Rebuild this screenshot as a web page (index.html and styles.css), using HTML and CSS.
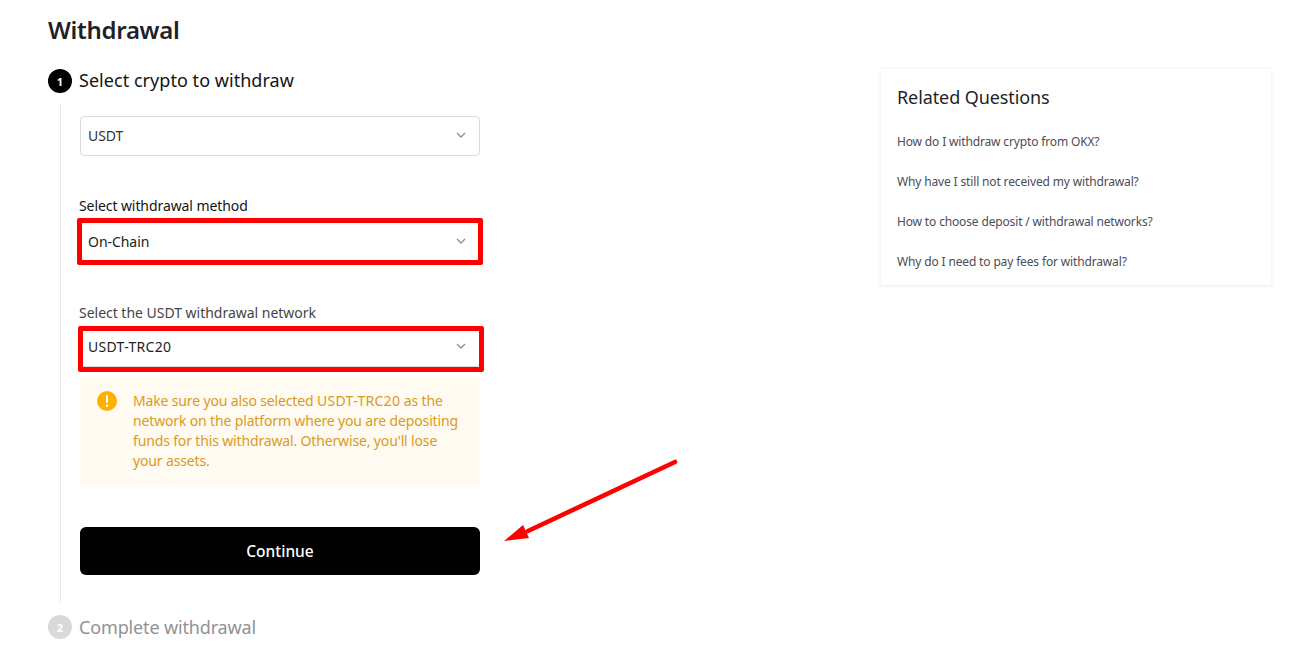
FILE: index.html
```html
<!DOCTYPE html>
<html lang="en">
<head>
<meta charset="utf-8">
<title>Withdrawal</title>
<link rel="stylesheet" href="styles.css">
</head>
<body>
<div class="page">
  <main class="main">
    <h1 class="title">Withdrawal</h1>
    <div class="step-head">
      <span class="badge">1</span>
      <span class="step-name">Select crypto to withdraw</span>
    </div>
    <div class="step-body">
      <div class="select first">
        <span>USDT</span>
        <svg class="chev" viewBox="0 0 10 6" width="10" height="6"><path d="M1 1l4 4 4-4" fill="none" stroke="#8e8e93" stroke-width="1.3"/></svg>
      </div>
      <div class="label dark">Select withdrawal method</div>
      <div class="select marked">
        <span>On-Chain</span>
        <svg class="chev" viewBox="0 0 10 6" width="10" height="6"><path d="M1 1l4 4 4-4" fill="none" stroke="#8e8e93" stroke-width="1.3"/></svg>
      </div>
      <div class="label net">Select the USDT withdrawal network</div>
      <div class="select marked second">
        <span class="code">USDT-TRC20</span>
        <svg class="chev" viewBox="0 0 10 6" width="10" height="6"><path d="M1 1l4 4 4-4" fill="none" stroke="#8e8e93" stroke-width="1.3"/></svg>
      </div>
      <div class="alert">
        <svg class="alert-icon" viewBox="0 0 20 20" width="20" height="20"><circle cx="10" cy="10" r="10" fill="#ffb100"/><rect x="9" y="4" width="2" height="8" rx="1" fill="#fff"/><circle cx="10" cy="14.8" r="1.2" fill="#fff"/></svg>
        <p class="alert-text">Make sure you also selected <span class="code">USDT-TRC20</span> as the network on the platform where you are depositing funds for this withdrawal. Otherwise, you'll lose your assets.</p>
      </div>
      <button class="continue">Continue</button>
    </div>
    <div class="step-head next">
      <span class="badge off">2</span>
      <span class="step-name off">Complete withdrawal</span>
    </div>
  </main>
  <aside class="card">
    <h2 class="card-title">Related Questions</h2>
    <a class="q">How do I withdraw crypto from OKX?</a>
    <a class="q">Why have I still not received my withdrawal?</a>
    <a class="q">How to choose deposit / withdrawal networks?</a>
    <a class="q">Why do I need to pay fees for withdrawal?</a>
  </aside>
</div>
<svg class="arrow" width="190" height="95" viewBox="0 0 190 95"><path d="M173 5 L26 74" stroke="#f00" stroke-width="4.6" stroke-linecap="round" fill="none"/><path d="M2 84 L21 68 L24 74 L27 81 Z" fill="#f00"/></svg>
</body>
</html>
```
FILE: styles.css
```css
* { box-sizing: border-box; }
html, body { margin: 0; height: 100%; background: #fff; overflow: hidden; }
body { font-family: "Noto Sans", "Liberation Sans", sans-serif; color: #1c1c24; position: relative; }
.page { display: flex; padding: 0 0 0 48px; }
.main { width: 432px; }
.title { margin: 0; padding-top: 14px; height: 69px; font-size: 24px; line-height: 32px; font-weight: 600; color: #1f2126; letter-spacing: -0.3px; }
.step-head { display: flex; align-items: center; gap: 7px; height: 24px; }
.step-head.next { margin-top: 13px; }
.badge { width: 24px; height: 24px; border-radius: 50%; background: #000; color: #fff; font-size: 11px; font-weight: 700; display: flex; align-items: center; justify-content: center; }
.badge.off { background: #d9d9d9; }
.step-name { font-size: 18px; line-height: 22px; padding-bottom: 2px; color: #141414; letter-spacing: 0.04px; }
.step-name.off { color: #929292; letter-spacing: -0.15px; padding-bottom: 0; }
.step-body { margin: 11px 0 0 12px; border-left: 1px solid #e8e8e8; padding: 12px 0 27px 19px; width: 420px; }
.select { position: relative; width: 400px; height: 40px; border: 1px solid #dcdcdc; border-radius: 4px; display: flex; align-items: center; justify-content: space-between; padding: 0 13px 2px 7px; font-size: 14px; color: #333; letter-spacing: -0.05px; }
.select.marked { color: #222; }
.select.marked::after { content: ""; position: absolute; left: -4px; right: -4px; top: -5px; bottom: -4px; border: 5px solid #f00; border-radius: 2px; }
.select.marked.second::after { left: -3px; right: -5px; top: -2px; bottom: -6px; }
.select.first { margin-bottom: 40px; }
.code { letter-spacing: 0.3px; }
.label { font-size: 14px; line-height: 20px; margin-left: -1px; letter-spacing: -0.08px; }
.label.dark { color: #141414; height: 26px; }
.label.net { color: #444; margin-top: 41px; height: 24px; letter-spacing: -0.02px; }
.chev { display: block; }
.alert { margin-top: 8px; width: 400px; height: 112px; background: #fffbf3; border-radius: 4px; display: flex; align-items: flex-start; padding: 16px 12px 0 17px; gap: 16px; }
.alert-icon { flex: none; }
.alert-text { margin: 0; font-size: 14px; line-height: 20px; color: #d99a22; letter-spacing: -0.15px; }
.continue { display: block; width: 400px; height: 48px; margin-top: 40px; background: #000; border: 0; border-radius: 6px; color: #fff; font-family: inherit; font-size: 15.5px; font-weight: 500; padding: 0 0 1px; }
.card { margin: 68px 0 0 400px; width: 392px; height: 218px; padding: 0 16px; border: 1px solid #f6f6f6; box-shadow: 0 1px 3px rgba(0,0,0,.05); display: flex; flex-direction: column; }
.card-title { margin: 15px 0 22px; font-size: 18px; line-height: 26px; font-weight: 400; color: #1f1f29; letter-spacing: -0.1px; }
.q { font-size: 12px; line-height: 20px; margin-bottom: 20px; color: #4c4c56; letter-spacing: -0.15px; }
.arrow { position: absolute; left: 502px; top: 457px; }
```
